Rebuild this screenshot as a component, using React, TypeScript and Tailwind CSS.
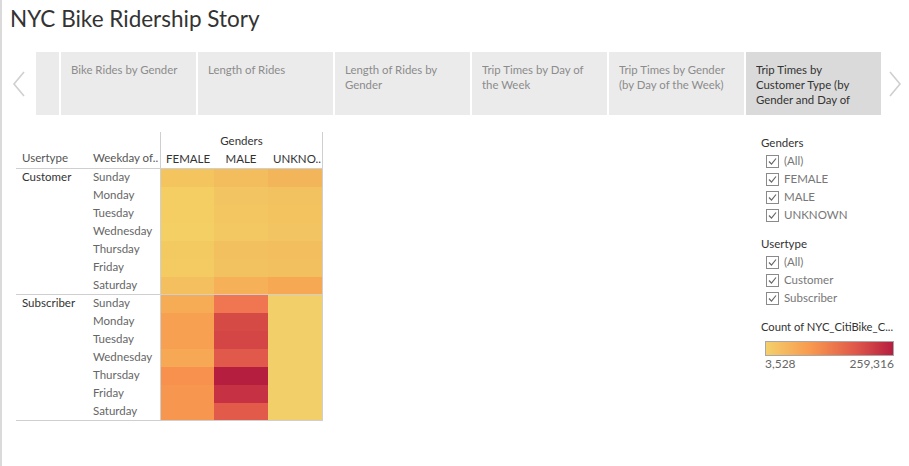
const tabs = [
  'Bike Rides by Gender',
  'Length of Rides',
  'Length of Rides by Gender',
  'Trip Times by Day of the Week',
  'Trip Times by Gender (by Day of the Week)',
  'Trip Times by Customer Type (by Gender and Day of'
];

const days = ['Sunday', 'Monday', 'Tuesday', 'Wednesday', 'Thursday', 'Friday', 'Saturday'];

// female, male, unknown per weekday
const customerColors = [
  ['#f4c55f', '#f3bd5e', '#f3b55a'],
  ['#f4cd63', '#f3c562', '#f3c260'],
  ['#f4cd63', '#f3c662', '#f3c360'],
  ['#f4cf64', '#f3c863', '#f3c562'],
  ['#f3c961', '#f3c05f', '#f3bf5e'],
  ['#f3cb62', '#f3c260', '#f3c05f'],
  ['#f4c05f', '#f5b058', '#f6a852']
];

const subscriberColors = [
  ['#f6ab55', '#ef7650', '#f3cf6a'],
  ['#f7a052', '#d64a46', '#f3cf6a'],
  ['#f7a052', '#d44545', '#f3cf6a'],
  ['#f6a854', '#e0594a', '#f3cf6a'],
  ['#f8914e', '#b61e40', '#f3cf6a'],
  ['#f7974f', '#c63143', '#f3cf6a'],
  ['#f7974f', '#e15a4a', '#f3cf6a']
];

const Chevron = ({ dir }: { dir: 'left' | 'right' }) => (
  <svg width="14" height="26" viewBox="0 0 14 26" aria-hidden="true">
    <path
      d={dir === 'left' ? 'M12 1 L2 13 L12 25' : 'M2 1 L12 13 L2 25'}
      fill="none"
      stroke="#cfcfcf"
      strokeWidth="1.6"
    />
  </svg>
);

const CheckItem = ({ label }: { label: string }) => (
  <div className="flex h-[18px] items-center gap-[5px] pl-[5px]">
    <svg width="13" height="13" viewBox="0 0 13 13" aria-hidden="true">
      <rect x="0.5" y="0.5" width="12" height="12" fill="#fff" stroke="#8a8a8a" />
      <path d="M3 6.5 L5.5 9.2 L10 3.5" fill="none" stroke="#666" strokeWidth="1.2" />
    </svg>
    <span className="text-[11.5px] text-[#777]">{label}</span>
  </div>
);

const Group = ({ name, colors }: { name: string; colors: string[][] }) => (
  <div className="flex h-[126px] overflow-hidden border-b border-[#cfcfcf]">
    <div className="w-[72px] pl-[6px] text-[11.5px] leading-[16px] text-[#333]">{name}</div>
    <div className="w-[72px] pl-[5px]">
      {days.map((d) => (
        <div key={d} className="h-[18px] text-[11.5px] leading-[16px] text-[#666]">
          {d}
        </div>
      ))}
    </div>
    <div className="border-x border-[#cfcfcf]">
      {colors.map((row, i) => (
        <div key={i} className="flex h-[18px]">
          {row.map((c, j) => (
            <div key={j} className={j === 0 ? 'w-[53px]' : 'w-[54px]'} style={{ background: c }} />
          ))}
        </div>
      ))}
    </div>
  </div>
);

export default function App() {
  return (
    <div
      className="h-[466px] w-[909px] overflow-hidden border-l-2 border-[#dadada] bg-white"
      style={{ fontFamily: 'Lato, "Open Sans", sans-serif' }}
    >
      <div className="h-[52px] pl-[8px] pt-[5px] text-[22.5px] leading-[28px] text-[#333]">
        NYC Bike Ridership Story
      </div>

      <div className="flex h-[63px]">
        <div className="flex w-[34px] items-center justify-center">
          <Chevron dir="left" />
        </div>
        <div className="w-[23px] bg-[#ebebeb]" />
        <div className="ml-[2px] flex gap-[2px]">
          {tabs.map((t, i) => {
            const selected = i === tabs.length - 1;
            return (
              <div
                key={t}
                className={`w-[135px] px-[10px] pt-[10px] ${selected ? 'bg-[#dadada] text-[#333]' : 'bg-[#ebebeb] text-[#8c8c8c]'}`}
              >
                <div className="max-h-[45px] overflow-hidden text-[11.4px] leading-[15px]">{t}</div>
              </div>
            );
          })}
        </div>
        <div className="flex flex-1 items-center justify-center">
          <Chevron dir="right" />
        </div>
      </div>

      <div className="flex">
        <div className="ml-[14px] mt-[17px] w-[307px]">
          <div className="flex h-[37px] border-b border-[#cfcfcf]">
            <div className="flex w-[72px] items-end pb-[1px] pl-[6px] text-[11.5px] leading-[18px] text-[#555]">
              Usertype
            </div>
            <div className="flex w-[72px] items-end pb-[1px] pl-[5px] text-[11.5px] leading-[18px] text-[#555]">
              Weekday of..
            </div>
            <div className="w-[163px] border-x border-[#cfcfcf] text-[11.5px] leading-[18px] text-[#333]">
              <div className="text-center">Genders</div>
              <div className="flex">
                <div className="w-[53px] pl-[5px]">FEMALE</div>
                <div className="w-[54px] text-center">MALE</div>
                <div className="w-[54px] pl-[5px]">UNKNO..</div>
              </div>
            </div>
          </div>
          <Group name="Customer" colors={customerColors} />
          <Group name="Subscriber" colors={subscriberColors} />
        </div>

        <div className="ml-auto mr-[8px] mt-[19px] flex w-[140px] flex-col">
          <div>
            <div className="h-[18px] text-[11.5px] leading-[18px] text-[#333]">Genders</div>
            {['(All)', 'FEMALE', 'MALE', 'UNKNOWN'].map((l) => (
              <CheckItem key={l} label={l} />
            ))}
          </div>
          <div className="mt-[11px]">
            <div className="h-[18px] text-[11.5px] leading-[18px] text-[#333]">Usertype</div>
            {['(All)', 'Customer', 'Subscriber'].map((l) => (
              <CheckItem key={l} label={l} />
            ))}
          </div>
          <div className="mt-[11px]">
            <div className="h-[18px] whitespace-nowrap text-[11.2px] leading-[18px] text-[#333]">
              Count of NYC_CitiBike_C...
            </div>
            <div className="ml-[4px] mt-[5px] h-[15px] w-[129px] border border-[#a8a8a8] bg-[linear-gradient(to_right,#f4d06b,#f8994f_35%,#e0594a_70%,#b61e40)]" />
            <div className="ml-[4px] flex w-[129px] justify-between text-[12px] leading-[16px] text-[#666]">
              <span>3,528</span>
              <span>259,316</span>
            </div>
          </div>
        </div>
      </div>
    </div>
  );
}
